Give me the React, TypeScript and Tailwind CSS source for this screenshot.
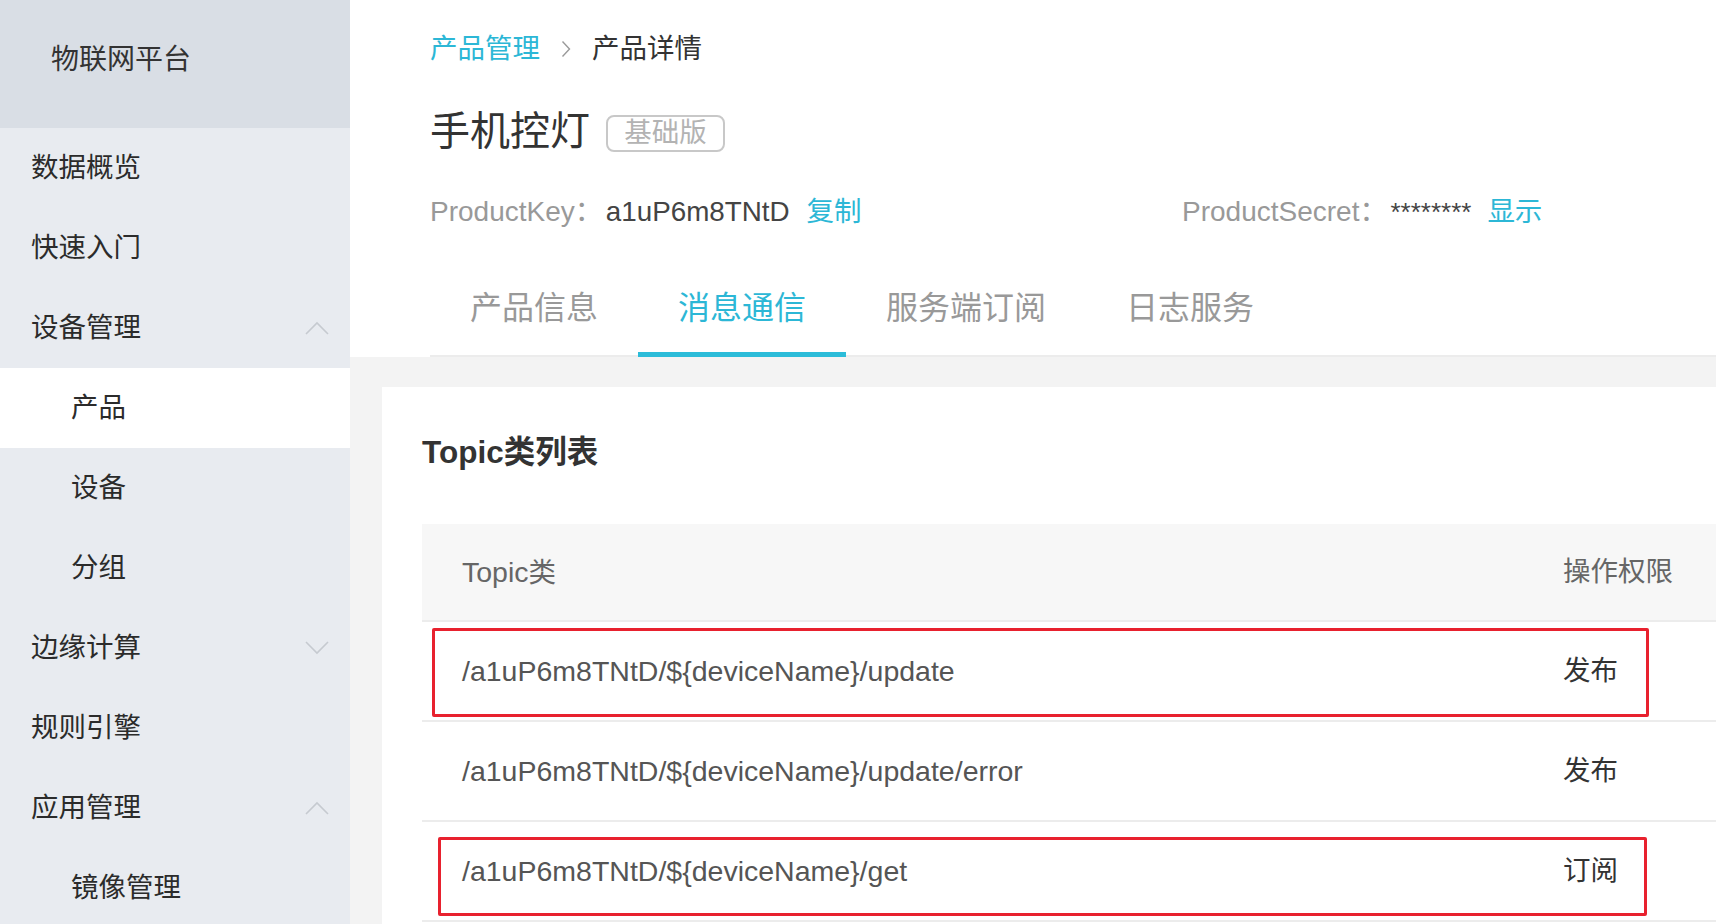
import React from "react";

const FONT = "font-['Liberation_Sans','Noto_Sans_CJK_SC',sans-serif]";

type NavItem = {
  label: string;
  level: 1 | 2;
  active?: boolean;
  chevron?: "up" | "down";
};

const navItems: NavItem[] = [
  { label: "数据概览", level: 1 },
  { label: "快速入门", level: 1 },
  { label: "设备管理", level: 1, chevron: "up" },
  { label: "产品", level: 2, active: true },
  { label: "设备", level: 2 },
  { label: "分组", level: 2 },
  { label: "边缘计算", level: 1, chevron: "down" },
  { label: "规则引擎", level: 1 },
  { label: "应用管理", level: 1, chevron: "up" },
  { label: "镜像管理", level: 2 },
];

const tabs = ["产品信息", "消息通信", "服务端订阅", "日志服务"];

const topics = [
  { path: "/a1uP6m8TNtD/${deviceName}/update", perm: "发布", mark: "a" },
  { path: "/a1uP6m8TNtD/${deviceName}/update/error", perm: "发布" },
  { path: "/a1uP6m8TNtD/${deviceName}/get", perm: "订阅", mark: "b" },
];

function Chevron({ dir }: { dir: "up" | "down" }) {
  return (
    <svg width="24" height="14" viewBox="0 0 24 14" fill="none">
      <path
        d={dir === "up" ? "M1 13 L12 2 L23 13" : "M1 1 L12 12 L23 1"}
        stroke="#c6cad0"
        strokeWidth="1.6"
      />
    </svg>
  );
}

function Sidebar() {
  return (
    <aside className="w-[350px] shrink-0 bg-[#e8ebf0] min-h-[924px]">
      <div className="h-[128px] bg-[#d9dee5] flex items-center pl-[51px] pb-[8px] text-[28px] text-[#333]">
        物联网平台
      </div>
      {navItems.map((item) => (
        <div
          key={item.label}
          className={`h-[80px] flex items-center justify-between pr-[21px] text-[27.5px] text-[#2b2b2b] ${
            item.level === 1 ? "pl-[31px]" : "pl-[71px]"
          } ${item.active ? "bg-white" : ""}`}
        >
          <span>{item.label}</span>
          {item.chevron && <Chevron dir={item.chevron} />}
        </div>
      ))}
    </aside>
  );
}

function Header() {
  return (
    <div className="pl-[80px] bg-white">
      <div className="h-[96px] flex items-center text-[27.5px] pt-[2px]">
        <span className="text-[#2cb7d6]">产品管理</span>
        <svg className="mx-[21px]" width="10" height="18" viewBox="0 0 10 18" fill="none">
          <path d="M1.5 1.5 L8.5 9 L1.5 16.5" stroke="#9a9a9a" strokeWidth="1.4" />
        </svg>
        <span className="text-[#333]">产品详情</span>
      </div>
      <div className="h-[70px] flex items-center">
        <span className="text-[40px] text-[#333] leading-none">手机控灯</span>
        <span className="ml-[16px] mt-[4px] h-[37px] w-[119px] flex items-center justify-center border-2 border-[#c8c8c8] rounded-[8px] text-[27.5px] text-[#b3b3b3]">
          基础版
        </span>
      </div>
      <div className="h-[90px] flex items-center text-[27.5px] pt-[2px]">
        <div className="w-[752px] flex items-center">
          <span className="text-[#999] text-[28px]">ProductKey：</span>
          <span className="text-[#444] text-[27.8px] ml-[3px]">a1uP6m8TNtD</span>
          <span className="text-[#2cb7d6] ml-[17px]">复制</span>
        </div>
        <span className="text-[#999] text-[28px]">ProductSecret：</span>
        <span className="text-[#444] text-[26px] ml-[3px]">********</span>
        <span className="text-[#2cb7d6] ml-[16px]">显示</span>
      </div>
      <div className="h-[101px] flex items-stretch border-b-2 border-[#ececec]">
        {tabs.map((t, i) => (
          <div
            key={t}
            className={`relative px-[40px] flex items-center pt-[4px] text-[32px] ${
              i === 1 ? "text-[#2cb7d6]" : "text-[#999]"
            }`}
          >
            {t}
            {i === 1 && (
              <span className="absolute left-0 right-0 -bottom-[2px] h-[5px] bg-[#2cbcd9]" />
            )}
          </div>
        ))}
      </div>
    </div>
  );
}

function TopicTable() {
  return (
    <div>
      <div className="h-[98px] bg-[#f7f7f7] border-b-2 border-[#ececec] flex items-center text-[27.5px] text-[#666]">
        <span className="flex-1 pl-[40px]">
          <span className="text-[28.5px]">Topic</span>类
        </span>
        <span className="w-[153px]">操作权限</span>
      </div>
      {topics.map((row) => (
        <div
          key={row.path}
          className="relative h-[100px] border-b-2 border-[#ececec] flex items-center text-[27.5px]"
        >
          <span className="flex-1 pl-[40px] text-[#555] text-[28.5px]">{row.path}</span>
          <span className="w-[153px] text-[#333]">{row.perm}</span>
          {row.mark === "a" && (
            <span className="absolute left-[10px] top-[6px] w-[1217px] h-[89px] border-[3px] border-[#e8212e] rounded-[2px]" />
          )}
          {row.mark === "b" && (
            <span className="absolute left-[16px] top-[15px] w-[1209px] h-[79px] border-[3px] border-[#e8212e] rounded-[2px]" />
          )}
        </div>
      ))}
    </div>
  );
}

export default function App() {
  return (
    <div className={`flex w-[1716px] h-[924px] overflow-hidden bg-white ${FONT}`}>
      <Sidebar />
      <main className="flex-1 flex flex-col min-w-0">
        <Header />
        <div className="flex-1 bg-[#f3f3f3] pl-[32px] pt-[30px]">
          <div className="bg-white h-full pl-[40px]">
            <div className="pt-[46px] h-[137px] text-[31.5px] font-bold text-[#333] leading-[38px]">
              Topic类列表
            </div>
            <TopicTable />
          </div>
        </div>
      </main>
    </div>
  );
}
